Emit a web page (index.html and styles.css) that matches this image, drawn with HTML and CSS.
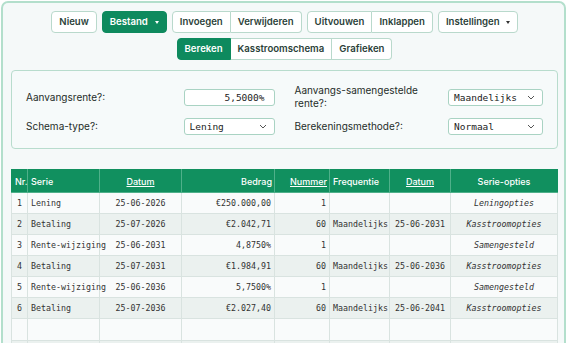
FILE: index.html
```html
<!DOCTYPE html>
<html lang="nl">
<head>
    <meta charset="UTF-8">
    <meta name="viewport" content="width=device-width,initial-scale=1.0">
    <title>Leningschema</title>
    <link rel="stylesheet" href="styles.css">
</head>
<body>
    <div class="app">
        <div class="toolbar">
            <div class="toolbar-row">
                <button class="btn">Nieuw</button>
                <button class="btn btn-primary">Bestand <span class="caret"></span></button>
                <div class="btn-group">
                    <button class="btn">Invoegen</button>
                    <button class="btn">Verwijderen</button>
                </div>
                <div class="btn-group">
                    <button class="btn">Uitvouwen</button>
                    <button class="btn">Inklappen</button>
                </div>
                <button class="btn">Instellingen <span class="caret dark"></span></button>
            </div>
            <div class="toolbar-row">
                <div class="btn-group">
                    <button class="btn btn-primary">Bereken</button>
                    <button class="btn">Kasstroomschema</button>
                    <button class="btn">Grafieken</button>
                </div>
            </div>
        </div>

        <div class="panel">
            <div class="field-col">
                <div class="field">
                    <label>Aanvangsrente?:</label>
                    <input class="input narrow" type="text" value="5,5000%">
                </div>
                <div class="field">
                    <label>Schema-type?:</label>
                    <div class="select narrow">
                        <span>Lening</span>
                        <svg width="8" height="5" viewBox="0 0 8 5"><path d="M1 1l3 3 3-3" fill="none" stroke="#555" stroke-width="1"/></svg>
                    </div>
                </div>
            </div>
            <div class="field-col">
                <div class="field">
                    <label>Aanvangs-samengestelde rente?:</label>
                    <div class="select wide">
                        <span>Maandelijks</span>
                        <svg width="8" height="5" viewBox="0 0 8 5"><path d="M1 1l3 3 3-3" fill="none" stroke="#555" stroke-width="1"/></svg>
                    </div>
                </div>
                <div class="field">
                    <label>Berekeningsmethode?:</label>
                    <div class="select wide">
                        <span>Normaal</span>
                        <svg width="8" height="5" viewBox="0 0 8 5"><path d="M1 1l3 3 3-3" fill="none" stroke="#555" stroke-width="1"/></svg>
                    </div>
                </div>
            </div>
        </div>

        <table class="schema">
            <colgroup>
                <col style="width:16px">
                <col style="width:72px">
                <col style="width:82px">
                <col style="width:93px">
                <col style="width:55px">
                <col style="width:60px">
                <col style="width:61px">
                <col>
            </colgroup>
            <thead>
                <tr>
                    <th class="left">Nr.</th>
                    <th class="left">Serie</th>
                    <th class="center"><a href="#">Datum</a></th>
                    <th class="right">Bedrag</th>
                    <th class="right"><a href="#">Nummer</a></th>
                    <th class="left">Frequentie</th>
                    <th class="center"><a href="#">Datum</a></th>
                    <th class="center">Serie-opties</th>
                </tr>
            </thead>
            <tbody>
                <tr>
                    <td class="center">1</td><td>Lening</td><td class="center">25-06-2026</td><td class="right">€250.000,00</td>
                    <td class="right">1</td><td></td><td></td><td class="center opt">Leningopties</td>
                </tr>
                <tr>
                    <td class="center">2</td><td>Betaling</td><td class="center">25-07-2026</td><td class="right">€2.042,71</td>
                    <td class="right">60</td><td>Maandelijks</td><td class="center">25-06-2031</td><td class="center opt">Kasstroomopties</td>
                </tr>
                <tr>
                    <td class="center">3</td><td>Rente-wijziging</td><td class="center">25-06-2031</td><td class="right">4,8750%</td>
                    <td class="right">1</td><td></td><td></td><td class="center opt">Samengesteld</td>
                </tr>
                <tr>
                    <td class="center">4</td><td>Betaling</td><td class="center">25-07-2031</td><td class="right">€1.984,91</td>
                    <td class="right">60</td><td>Maandelijks</td><td class="center">25-06-2036</td><td class="center opt">Kasstroomopties</td>
                </tr>
                <tr>
                    <td class="center">5</td><td>Rente-wijziging</td><td class="center">25-06-2036</td><td class="right">5,7500%</td>
                    <td class="right">1</td><td></td><td></td><td class="center opt">Samengesteld</td>
                </tr>
                <tr>
                    <td class="center">6</td><td>Betaling</td><td class="center">25-07-2036</td><td class="right">€2.027,40</td>
                    <td class="right">60</td><td>Maandelijks</td><td class="center">25-06-2041</td><td class="center opt">Kasstroomopties</td>
                </tr>
                <tr class="empty">
                    <td></td><td></td><td></td><td></td><td></td><td></td><td></td><td></td>
                </tr>
                <tr class="empty">
                    <td></td><td></td><td></td><td></td><td></td><td></td><td></td><td></td>
                </tr>
            </tbody>
        </table>
    </div>
</body>
</html>
```

FILE: styles.css
```css
html, body {
    margin: 0;
    height: 100%;
    overflow: hidden;
    background: #fff;
    font-family: Inter, "Liberation Sans", sans-serif;
    color: #1f2d29;
}
/* Outer app frame */
.app {
    margin: 1px 4px 0 1px;
    border: 2px solid #b3dfcc;
    border-bottom: none;
    border-radius: 7px 7px 0 0;
    background: #f5f9f9;
    padding: 8px 6px 0 8px;
    height: 400px;
}
/* Toolbar */
.toolbar {
    display: flex;
    flex-direction: column;
    align-items: center;
    gap: 5px;
}
.toolbar-row {
    display: flex;
    gap: 5px;
}
.btn {
    font-family: Inter, sans-serif;
    font-size: 9.6px;
    font-weight: 600;
    line-height: 14px;
    color: #2b3f39;
    background: #fff;
    border: 1px solid #b9d9cc;
    border-radius: 4px;
    padding: 3px 7px;
    margin: 0;
    display: flex;
    align-items: center;
    cursor: pointer;
}
.btn-primary {
    background: #0e8a5e;
    border-color: #0e8a5e;
    color: #fff;
}
.caret {
    display: inline-block;
    width: 0;
    height: 0;
    margin-left: 7px;
    border-left: 2.5px solid transparent;
    border-right: 2.5px solid transparent;
    border-top: 3px solid #fff;
}
.caret.dark {
    margin-left: 6px;
    border-top-color: #333;
}
.btn-group {
    display: flex;
}
.btn-group .btn {
    border-radius: 0;
}
.btn-group .btn + .btn {
    border-left: none;
}
.btn-group .btn:first-child {
    border-radius: 4px 0 0 4px;
}
.btn-group .btn:last-child {
    border-radius: 0 4px 4px 0;
}
/* Settings panel */
.panel {
    margin-top: 10px;
    border: 1px solid #b8dccd;
    border-radius: 4px;
    background: #f6fafa;
    padding: 13px 14px;
    display: grid;
    grid-template-columns: 1fr 1fr;
    column-gap: 20px;
}
.field-col {
    display: flex;
    flex-direction: column;
    gap: 8px;
}
.field {
    display: flex;
    align-items: center;
    justify-content: space-between;
    min-height: 17px;
}
.field:first-child {
    min-height: 26px;
}
.field label {
    font-size: 10px;
    line-height: 13px;
    max-width: 140px;
}
.input, .select {
    box-sizing: border-box;
    height: 17px;
    border: 1px solid #a9d3c3;
    border-radius: 3px;
    background: #fff;
    font-family: "DejaVu Sans Mono", monospace;
    font-size: 9.5px;
    color: #222;
}
.input {
    text-align: right;
    padding: 0 9px;
    margin: 0;
}
.select {
    display: flex;
    align-items: center;
    justify-content: space-between;
    padding: 0 7px 0 5px;
}
.narrow {
    width: 91px;
}
.wide {
    width: 95px;
}
/* Schedule table */
.schema {
    margin-top: 20px;
    width: 547px;
    table-layout: fixed;
    border-collapse: collapse;
    font-family: "DejaVu Sans Mono", monospace;
    font-size: 8.3px;
    color: #333;
}
.schema th {
    background: #11905f;
    color: #fff;
    font-family: Inter, sans-serif;
    font-size: 9px;
    font-weight: 500;
    height: 22px;
    padding: 0 2px;
    border: 1px solid #4fb08a;
    border-top-color: #11905f;
    white-space: nowrap;
}
.schema th:first-child {
    border-left-color: #11905f;
}
.schema th:last-child {
    border-right-color: #11905f;
}
.schema th a {
    color: #fff;
}
.schema td {
    height: 20px;
    padding: 0 3px;
    border: 1px solid #d9e3e0;
    white-space: nowrap;
}
.schema tbody tr:nth-child(odd) {
    background: #f9fbfb;
}
.schema tbody tr:nth-child(even) {
    background: #ebf1ef;
}
.schema tr.empty td {
    height: 21px;
}
.left { text-align: left; }
.center { text-align: center; }
.right { text-align: right; }
.schema th.left { padding-left: 3px; }
.opt {
    font-style: italic;
}
```
